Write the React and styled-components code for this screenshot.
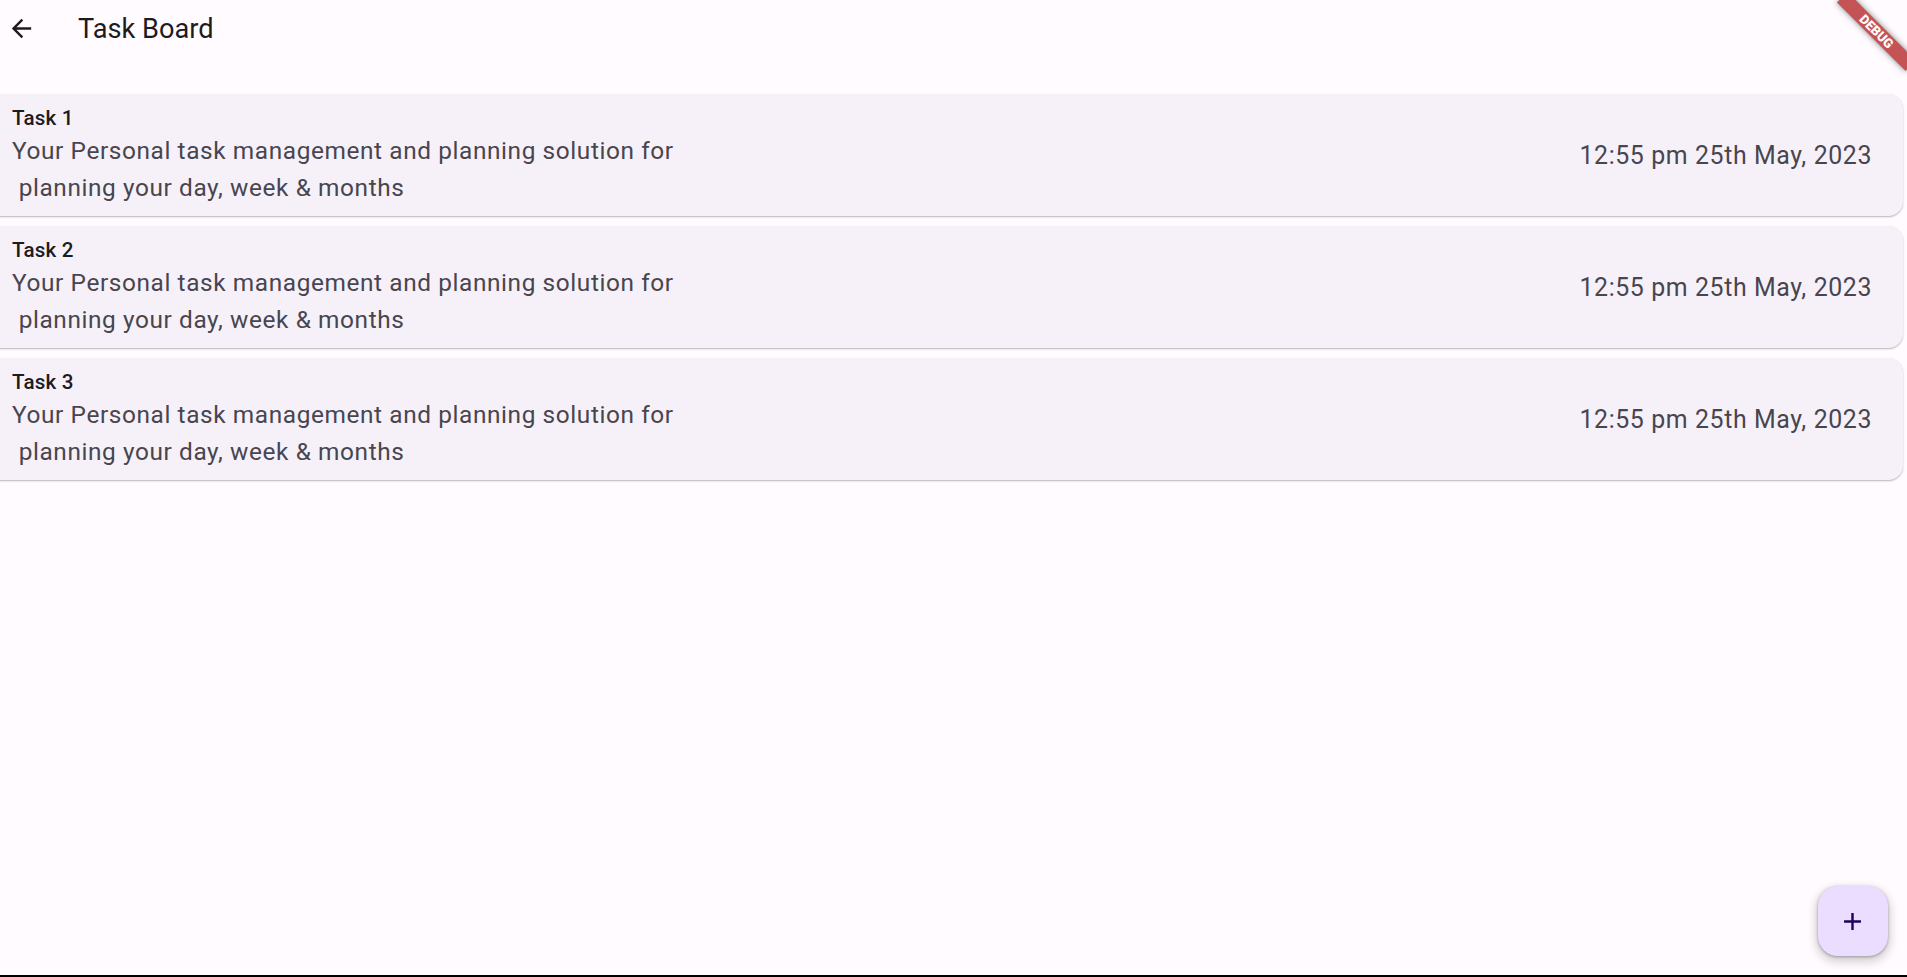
import React from "react";
import styled, { createGlobalStyle } from "styled-components";

const GlobalStyle = createGlobalStyle`
  html, body {
    margin: 0;
    padding: 0;
    background: #fffbfe;
    font-family: Roboto, "Noto Sans", "Liberation Sans", sans-serif;
    overflow: hidden;
  }
  * { box-sizing: border-box; }
`;

const Page = styled.div`
  position: relative;
  display: flex;
  flex-direction: column;
  height: 100vh;
  background: #fffbfe;
`;

const Content = styled.main`
  flex: 1;
  display: flex;
  flex-direction: column;
`;

const AppBar = styled.header`
  display: flex;
  align-items: center;
  height: 56px;
  padding-left: 7px;
`;

const IconButton = styled.button`
  display: flex;
  align-items: center;
  justify-content: center;
  width: 29px;
  height: 29px;
  padding: 0;
  border: none;
  background: transparent;
  color: #1c1b1f;
  cursor: pointer;
`;

const Title = styled.h1`
  margin: 1px 0 0 42px;
  font-size: 27.2px;
  font-weight: 400;
  line-height: 32px;
  color: #1c1b1f;
`;

const TaskList = styled.section`
  display: flex;
  flex-direction: column;
  gap: 10px;
  margin-top: 38px;
`;

const Card = styled.article`
  display: flex;
  align-items: center;
  justify-content: space-between;
  height: 122px;
  margin: 0 4px 0 -16px;
  padding: 12px 31px 9px 28px;
  background: #f6f1f9;
  border-radius: 14.6px;
  box-shadow: 0 1px 1.5px rgba(0, 0, 0, 0.22), 0 1px 3px rgba(0, 0, 0, 0.08);
`;

const CardBody = styled.div`
  display: flex;
  flex-direction: column;
  align-self: stretch;
`;

const TaskTitle = styled.h2`
  margin: 0;
  font-size: 20.6px;
  font-weight: 500;
  letter-spacing: 0.18px;
  line-height: 24px;
  color: #1c1b1f;
`;

const TaskText = styled.p`
  margin: 2px 0 0;
  font-size: 24.4px;
  font-weight: 400;
  letter-spacing: 0.6px;
  line-height: 37px;
  color: #49454f;
  white-space: pre-wrap;
`;

const TaskDate = styled.span`
  font-size: 24.9px;
  font-weight: 400;
  letter-spacing: 0.6px;
  line-height: 36.5px;
  color: #49454f;
  margin-top: -1px;
`;

const BottomEdge = styled.div`
  height: 2px;
  background: #000;
`;

const Fab = styled.button`
  position: absolute;
  right: 19.5px;
  bottom: 21px;
  width: 70px;
  height: 70px;
  display: flex;
  align-items: center;
  justify-content: center;
  padding: 0;
  border: none;
  border-radius: 20px;
  background: #eaddff;
  color: #21005d;
  box-shadow: 0 1px 3px rgba(0, 0, 0, 0.3), 0 4px 8px 3px rgba(0, 0, 0, 0.15);
  cursor: pointer;
`;

const BannerClip = styled.div`
  position: absolute;
  top: 0;
  right: 0;
  width: 100px;
  height: 100px;
  overflow: hidden;
  pointer-events: none;
`;

const Ribbon = styled.div`
  position: absolute;
  left: 20.5px;
  top: 23.5px;
  width: 97px;
  height: 15px;
  transform: rotate(45deg);
  background: rgba(176, 30, 30, 0.76);
  box-shadow: 0 0 6px rgba(0, 0, 0, 0.45);
  color: #fff;
  font-size: 13px;
  font-weight: 900;
  line-height: 15px;
  text-align: center;
  letter-spacing: 0;
`;

const ArrowBack = () => (
  <svg width="29" height="29" viewBox="0 0 24 24" fill="currentColor">
    <path d="M20 11H7.83l5.59-5.59L12 4l-8 8 8 8 1.41-1.41L7.83 13H20v-2z" />
  </svg>
);

const PlusIcon = () => (
  <svg width="29" height="29" viewBox="0 0 24 24" fill="currentColor">
    <path d="M19 13h-6v6h-2v-6H5v-2h6V5h2v6h6v2z" />
  </svg>
);

const tasks = [1, 2, 3].map((n) => ({
  id: n,
  title: `Task ${n}`,
  text: "Your Personal task management and planning solution for\n planning your day, week & months",
  date: "12:55 pm 25th May, 2023",
}));

export default function App() {
  return (
    <>
      <GlobalStyle />
      <Page>
        <Content>
          <AppBar>
            <IconButton aria-label="Back">
              <ArrowBack />
            </IconButton>
            <Title>Task Board</Title>
          </AppBar>
          <TaskList>
            {tasks.map((t) => (
              <Card key={t.id}>
                <CardBody>
                  <TaskTitle>{t.title}</TaskTitle>
                  <TaskText>{t.text}</TaskText>
                </CardBody>
                <TaskDate>{t.date}</TaskDate>
              </Card>
            ))}
          </TaskList>
        </Content>
        <BottomEdge />
        <Fab aria-label="Add task">
          <PlusIcon />
        </Fab>
        <BannerClip>
          <Ribbon>DEBUG</Ribbon>
        </BannerClip>
      </Page>
    </>
  );
}
